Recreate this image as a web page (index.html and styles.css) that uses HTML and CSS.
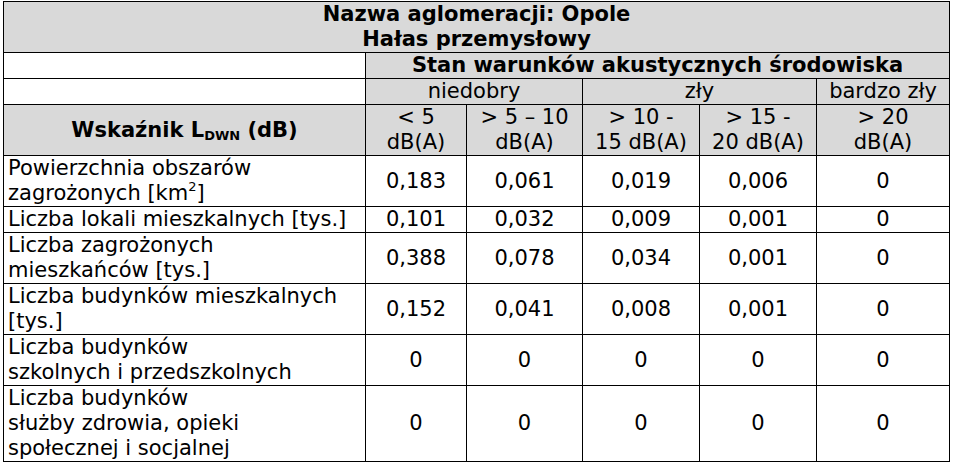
FILE: index.html
```html
<!DOCTYPE html>
<html lang="pl">
<head>
<meta charset="utf-8">
<link rel="stylesheet" href="styles.css">
</head>
<body>
<table class="t">
  <colgroup>
    <col class="c0"><col class="c1"><col class="c2"><col class="c3"><col class="c4"><col class="c5">
  </colgroup>
  <tr class="gray">
    <td colspan="6" class="b ctr">Nazwa aglomeracji: Opole<br>Hałas przemysłowy</td>
  </tr>
  <tr>
    <td class="white"></td>
    <td colspan="5" class="gray b ctr">Stan warunków akustycznych środowiska</td>
  </tr>
  <tr>
    <td class="white"></td>
    <td colspan="2" class="gray ctr">niedobry</td>
    <td colspan="2" class="gray ctr">zły</td>
    <td class="gray ctr">bardzo zły</td>
  </tr>
  <tr class="gray">
    <td class="b ctr">Wskaźnik L<sub>DWN</sub> (dB)</td>
    <td class="ctr">&lt; 5<br>dB(A)</td>
    <td class="ctr">&gt; 5 – 10<br>dB(A)</td>
    <td class="ctr">&gt; 10 -<br>15 dB(A)</td>
    <td class="ctr">&gt; 15 -<br>20 dB(A)</td>
    <td class="ctr">&gt; 20<br>dB(A)</td>
  </tr>
  <tr>
    <td class="lbl">Powierzchnia obszarów<br>zagrożonych [km<sup>2</sup>]</td>
    <td class="ctr">0,183</td><td class="ctr">0,061</td><td class="ctr">0,019</td><td class="ctr">0,006</td><td class="ctr">0</td>
  </tr>
  <tr>
    <td class="lbl">Liczba lokali mieszkalnych [tys.]</td>
    <td class="ctr">0,101</td><td class="ctr">0,032</td><td class="ctr">0,009</td><td class="ctr">0,001</td><td class="ctr">0</td>
  </tr>
  <tr>
    <td class="lbl">Liczba zagrożonych<br>mieszkańców [tys.]</td>
    <td class="ctr">0,388</td><td class="ctr">0,078</td><td class="ctr">0,034</td><td class="ctr">0,001</td><td class="ctr">0</td>
  </tr>
  <tr>
    <td class="lbl">Liczba budynków mieszkalnych<br>[tys.]</td>
    <td class="ctr">0,152</td><td class="ctr">0,041</td><td class="ctr">0,008</td><td class="ctr">0,001</td><td class="ctr">0</td>
  </tr>
  <tr>
    <td class="lbl">Liczba budynków<br>szkolnych i przedszkolnych</td>
    <td class="ctr">0</td><td class="ctr">0</td><td class="ctr">0</td><td class="ctr">0</td><td class="ctr">0</td>
  </tr>
  <tr>
    <td class="lbl">Liczba budynków<br>służby zdrowia, opieki<br>społecznej i socjalnej</td>
    <td class="ctr">0</td><td class="ctr">0</td><td class="ctr">0</td><td class="ctr">0</td><td class="ctr">0</td>
  </tr>
</table>
</body>
</html>
```
FILE: styles.css
```css
html, body {
  margin: 0;
  padding: 0;
  background: #ffffff;
}
body {
  padding: 1px 0 0 3px;
  font-family: "DejaVu Sans", Verdana, sans-serif;
  font-size: 21px;
  color: #000;
}
.t {
  border-collapse: collapse;
  table-layout: fixed;
  width: 947px;
}
.c0 { width: 362px; }
.c1 { width: 101px; }
.c2 { width: 116px; }
.c3 { width: 117px; }
.c4 { width: 117px; }
.c5 { width: 133px; }
.t td {
  border: 1px solid #000;
  padding: 0 4px;
  line-height: 25px;
  height: 25px;
  vertical-align: middle;
  white-space: nowrap;
  overflow: hidden;
}
.gray, .gray td { background: #d9d9d9; }
.t td.white { background: #ffffff; }
.b { font-weight: bold; }
.ctr { text-align: center; }
.lbl { text-align: left; }
sub {
  font-size: 13px;
  vertical-align: -3px;
  line-height: 0;
}
sup {
  font-size: 13px;
  vertical-align: 9px;
  line-height: 0;
}
```
